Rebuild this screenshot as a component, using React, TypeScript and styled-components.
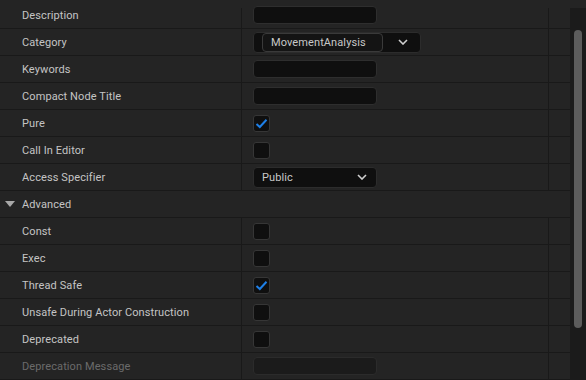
import React from "react";
import styled, { createGlobalStyle, css } from "styled-components";

const Global = createGlobalStyle`
  html, body { margin: 0; padding: 0; background: #242424; }
  body { font-family: Roboto, "Noto Sans", "Liberation Sans", sans-serif; letter-spacing: 0.1px; }
`;

const Page = styled.div`
  display: flex;
  width: 586px;
  height: 380px;
  overflow: hidden;
  background: #242424;
`;

const Main = styled.div`
  width: 570px;
  padding-top: 2px;
  display: flex;
  flex-direction: column;
`;

const Row = styled.div`
  display: grid;
  grid-template-columns: 242px 307px 21px;
  height: 26px;
  flex: none;
  border-bottom: 1px solid #191919;
`;

const dividerRight = css<{ $clip?: boolean }>`
  ${(p) =>
    p.$clip
      ? css`
          background: linear-gradient(#191919, #191919) right 6px / 1px calc(100% - 6px) no-repeat;
        `
      : css`
          border-right: 1px solid #191919;
        `}
`;

const NameCell = styled.div<{ $clip?: boolean; $dim?: boolean }>`
  display: flex;
  align-items: center;
  padding-left: 22px;
  font-size: 11px;
  color: ${(p) => (p.$dim ? "#6b6b6b" : "#c4c4c4")};
  box-sizing: border-box;
  ${dividerRight}
`;

const ValueCell = styled.div<{ $clip?: boolean }>`
  display: flex;
  align-items: center;
  padding-left: 11px;
  box-sizing: border-box;
  ${dividerRight}
`;

const ExtraCell = styled.div``;

const HeaderRow = styled.div`
  display: flex;
  align-items: center;
  height: 26px;
  flex: none;
  border-bottom: 1px solid #191919;
  padding-left: 5px;
  gap: 7px;
  font-size: 11px;
  color: #c4c4c4;
`;

const TextInput = styled.div<{ $disabled?: boolean }>`
  width: 124px;
  height: 18px;
  box-sizing: border-box;
  border-radius: 4px;
  background: ${(p) => (p.$disabled ? "#1b1b1b" : "#0f0f0f")};
  border: 1px solid ${(p) => (p.$disabled ? "#2b2b2b" : "#2e2e2e")};
`;

const Combo = styled.div<{ $w: number }>`
  width: ${(p) => p.$w}px;
  height: 21px;
  box-sizing: border-box;
  border-radius: 4px;
  background: #0f0f0f;
  border: 1px solid #2c2c2c;
  display: flex;
  align-items: center;
  justify-content: space-between;
  padding: 0 9px 0 8px;
  font-size: 11px;
  color: #c8c8c8;
`;

const CategoryCombo = styled(Combo)`
  padding: 0 12px 0 8px;
`;

const Pill = styled.div`
  width: 121px;
  height: 19px;
  box-sizing: border-box;
  border-radius: 4px;
  border: 1px solid #3a3a3a;
  background: #141414;
  display: flex;
  align-items: center;
  padding-left: 8px;
  font-size: 11px;
  color: #c8c8c8;
`;

const Box = styled.div`
  width: 17px;
  height: 17px;
  box-sizing: border-box;
  border-radius: 3px;
  background: #0f0f0f;
  border: 1px solid #363636;
  display: flex;
  align-items: center;
  justify-content: center;
`;

const Scroll = styled.div`
  width: 16px;
  margin-top: 8px;
  background: #1b1b1b;
  display: flex;
  justify-content: center;
  padding-top: 22px;
  box-sizing: border-box;
`;

const Thumb = styled.div`
  width: 8px;
  height: 298px;
  border-radius: 4px;
  background: #5c5c5c;
`;

const Chevron = () => (
  <svg width="10" height="6" viewBox="0 0 10 6">
    <path d="M1 1 L5 5 L9 1" fill="none" stroke="#cfcfcf" strokeWidth="1.6" />
  </svg>
);

const Check = ({ on }: { on?: boolean }) => (
  <Box>
    {on && (
      <svg width="13" height="11" viewBox="0 0 13 11">
        <path d="M1.5 6 L4.8 9 L11.5 1.8" fill="none" stroke="#1e7fe6" strokeWidth="2" />
      </svg>
    )}
  </Box>
);

type Kind = "text" | "check" | "checked" | "category" | "public" | "disabled";

const rowsTop: [string, Kind][] = [
  ["Description", "text"],
  ["Category", "category"],
  ["Keywords", "text"],
  ["Compact Node Title", "text"],
  ["Pure", "checked"],
  ["Call In Editor", "check"],
  ["Access Specifier", "public"],
];

const rowsAdv: [string, Kind][] = [
  ["Const", "check"],
  ["Exec", "check"],
  ["Thread Safe", "checked"],
  ["Unsafe During Actor Construction", "check"],
  ["Deprecated", "check"],
  ["Deprecation Message", "disabled"],
];

const Value = ({ kind }: { kind: Kind }) => {
  switch (kind) {
    case "text":
      return <TextInput />;
    case "disabled":
      return <TextInput $disabled />;
    case "check":
      return <Check />;
    case "checked":
      return <Check on />;
    case "category":
      return (
        <CategoryCombo $w={168}>
          <Pill>MovementAnalysis</Pill>
          <Chevron />
        </CategoryCombo>
      );
    case "public":
      return (
        <Combo $w={124}>
          <span>Public</span>
          <Chevron />
        </Combo>
      );
  }
};

const PropRow = ({ name, kind, clip }: { name: string; kind: Kind; clip?: boolean }) => (
  <Row>
    <NameCell $clip={clip} $dim={kind === "disabled"}>{name}</NameCell>
    <ValueCell $clip={clip}>
      <Value kind={kind} />
    </ValueCell>
    <ExtraCell />
  </Row>
);

export default function App() {
  return (
    <Page>
      <Global />
      <Main>
        {rowsTop.map(([n, k], i) => (
          <PropRow key={n} name={n} kind={k} clip={i === 0} />
        ))}
        <HeaderRow>
          <svg width="10" height="6" viewBox="0 0 10 6">
            <path d="M0 0 L10 0 L5 6 Z" fill="#a8a8a8" />
          </svg>
          <span>Advanced</span>
        </HeaderRow>
        {rowsAdv.map(([n, k]) => (
          <PropRow key={n} name={n} kind={k} />
        ))}
      </Main>
      <Scroll>
        <Thumb />
      </Scroll>
    </Page>
  );
}
